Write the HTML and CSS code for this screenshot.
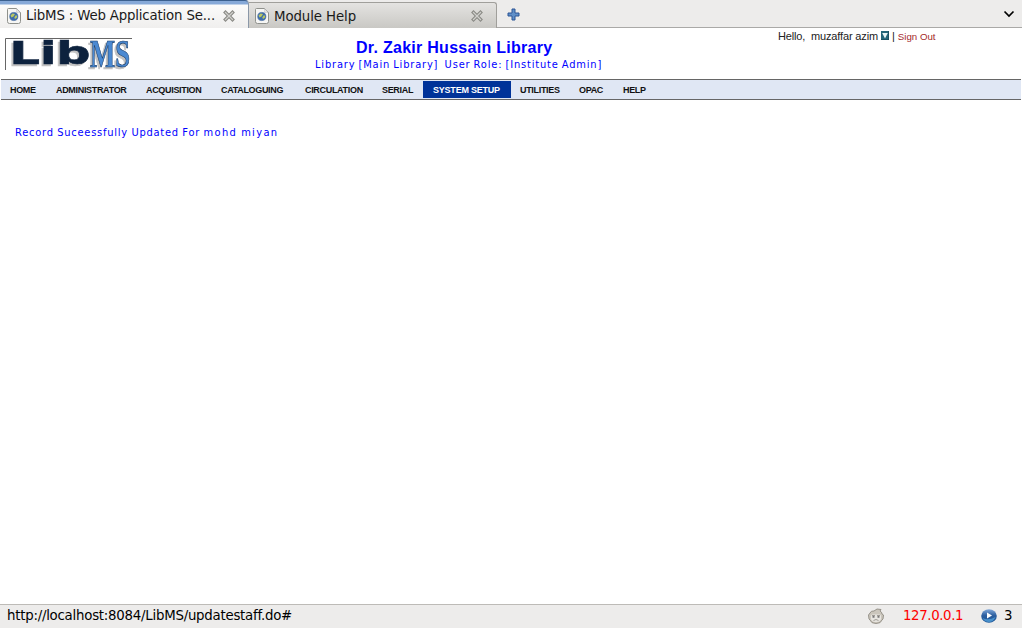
FILE: index.html
```html
<!DOCTYPE html>
<html lang="en">
<head>
<meta charset="utf-8">
<title>LibMS : Web Application Server</title>
<link rel="stylesheet" href="styles.css">
</head>
<body>
<svg width="0" height="0" class="defs" aria-hidden="true">
  <defs>
    <linearGradient id="blue" x1="0" y1="0" x2="0" y2="1"><stop offset="0" stop-color="#83aadb"/><stop offset=".45" stop-color="#2d5f9f"/><stop offset="1" stop-color="#1c5597"/></linearGradient>
    <symbol id="page" viewBox="0 0 14 16">
      <path d="M1.500.5h8l4 4v9q0 2-2 2h-9q-2 0-2-2v-12q0-1 1-1z" fill="#f6f6f4" stroke="#8f918c"/>
      <path d="M9.500.5q.8 1.500.2 3.800 2.500-.6 3.500.3z" fill="#fff" stroke="#aaa" stroke-width=".6"/>
      <circle cx="6.800" cy="8.500" r="4.100" fill="#3d6cab" stroke="#3f679f" stroke-width=".6"/>
      <path d="M3.500 7.500l2-2 2.500.5-1.500 2.500-2 1zM8.500 7.500l1.500 0v2L8 11 7.300 9.500z" fill="#b9c763"/>
    </symbol>
    <symbol id="close" viewBox="0 0 12 12">
      <path d="M2.500 2.500l7 7m0-7l-7 7" stroke="#888883" stroke-width="3.400" stroke-linecap="square"/>
      <path d="M2.500 2.500l7 7m0-7l-7 7" stroke="#d0d0cd" stroke-width="1.300" stroke-linecap="square"/>
    </symbol>
  </defs>
</svg>
<div class="window">
  <header class="tabs">
    <div class="tab tab-active"><svg class="page-icon"><use href="#page"/></svg><span class="tab-title">LibMS : Web Application Se...</span><svg class="close"><use href="#close"/></svg></div>
    <div class="tab tab-idle"><svg class="page-icon"><use href="#page"/></svg><span class="tab-title tab-title-idle">Module Help</span><svg class="close"><use href="#close"/></svg></div>
    <svg class="plus" viewBox="0 0 13 13"><path d="M5 1h3v4h4v3H8v4H5V8H1V5h4z" fill="#5f8fc8" stroke="#2a5595" stroke-linejoin="round"/></svg>
    <svg class="chevron" viewBox="0 0 12 8"><path d="M1.500 1.500L6 6l4.500-4.500" fill="none" stroke="#000" stroke-width="1.700"/></svg>
  </header>
  <main class="content">
    <div class="banner">
      <svg class="logo" viewBox="0 0 127 33">
        <path d="M.5 32V.5H127" fill="none" stroke="#666"/>
        <text x="4.500" y="26" textLength="81" lengthAdjust="spacingAndGlyphs" class="logo-lib">Lib</text>
        <text x="85" y="28.500" textLength="40" lengthAdjust="spacingAndGlyphs" class="logo-ms">MS</text>
      </svg>
      <div class="heading">
        <h1 class="library">Dr. Zakir Hussain Library</h1>
        <p class="role">Library [Main Library]&nbsp; User Role: [Institute Admin]</p>
      </div>
      <div class="user">
        <span class="hello">Hello,&nbsp; muzaffar azim</span>
        <svg class="drop" viewBox="0 0 8 9"><path d="M0 0h8v9H0z" fill="#236478"/><path d="M0 9h8V0" fill="none" stroke="#123c4a"/><path d="M1.200 2h5.600L4 7.500z" fill="#e9f5f5"/></svg>
        <span class="bar">|</span>
        <a class="signout">Sign Out</a>
      </div>
    </div>
    <nav class="menu">
      <a class="item">HOME</a><a class="item">ADMINISTRATOR</a><a class="item">ACQUISITION</a><a class="item">CATALOGUING</a><a class="item">CIRCULATION</a><a class="item">SERIAL</a><a class="item item-active">SYSTEM SETUP</a><a class="item">UTILITIES</a><a class="item">OPAC</a><a class="item">HELP</a>
    </nav>
    <p class="message">Record Suceessfully Updated For <span class="name">mohd miyan</span></p>
  </main>
  <footer class="status">
    <span class="url">http://localhost:8084/LibMS/updatestaff.do#</span>
    <svg class="face" viewBox="0 0 16 16"><path d="M2 5Q3 2.500 6 3l3-2 4 .5-1 1.500q2 1 2 3l1.500 1-.5 4-1 1q-1 3.500-6 3.500T2 12L1 11 .5 7z" fill="#cbc6bc" stroke="#8f8b82" stroke-width=".9"/><path d="M3 8q0-2 2.500-1.500h5Q13 6 13 8q1 6-5 6T3 8z" fill="#e8e6e1"/><path d="M5.500 12.500q2.500-2 5 0M4 7.500h3m2 0h3" fill="none" stroke="#8d8981" stroke-width=".8"/><path d="M4.500 8h2v1.700h-2zM9.500 8h2v1.700h-2z" fill="#777"/></svg>
    <span class="ip">127.0.0.1</span>
    <svg class="play" viewBox="0 0 16 14"><ellipse cx="8" cy="7" rx="7.800" ry="6.800" fill="url(#blue)"/><path d="M1.500 9q6 3 13-1-2 5-6.500 5T1.500 9z" fill="#62b5ec" opacity=".6"/><path d="M6 3.500l5 3-5 3z" fill="#fff"/></svg>
    <span class="count">3</span>
  </footer>
</div>
</body>
</html>
```
FILE: styles.css
```css
body { margin: 0; background: #fff; overflow: hidden; }
.defs { position: absolute; }
.window { width: 1022px; height: 628px; display: flex; flex-direction: column; }
.tabs, .status { font-family: "DejaVu Sans", sans-serif; font-size: 13.330px; color: #1a1a1a; background: #edeceb; white-space: nowrap; }
.tabs { height: 28px; display: flex; flex: none; box-sizing: border-box; border-bottom: 1px solid #aaa9a7; }
.tab { display: flex; box-sizing: border-box; }
.tab-active { width: 249px; height: 28px; padding: 4px 13px 0 7px; border-top: 1px solid #3b608f; border-right: 1px solid #8b98a8; border-radius: 0 4px 0 0; background: linear-gradient(#86a9d8 0, #86a9d8 3px, #fbfbfa 4px, #f0efee 27px); }
.tab-idle { width: 248px; height: 26px; margin-top: 2px; padding: 5px 13px 0 6px; border: 1px solid #a09f9b; border-left: 0; border-bottom: 0; border-radius: 0 3px 0 0; background: linear-gradient(#e4e3e1, #c9c8c4); }
.page-icon { width: 14px; height: 16px; margin-top: 3px; flex: none; }
.tab-idle .page-icon { margin-top: 0; }
.tab-title { width: 190px; margin: 3px 0 0 5px; line-height: 16px; letter-spacing: -.17px; }
.tab-title-idle { margin-top: 1px; letter-spacing: -.1px; }
.close { width: 12px; height: 12px; margin: 5px 0 0 auto; flex: none; }
.tab-idle .close { margin-top: 2px; }
.plus { width: 13px; height: 13px; margin: 8px 0 0 10px; }
.chevron { width: 12px; height: 8px; margin: 10px 7px 0 auto; }
.content { flex: 1; }
.banner { height: 51px; display: grid; grid-template-columns: 315px 463px 1fr; }
.logo { width: 127px; height: 33px; margin: 10px 0 0 5px; overflow: visible; }
.logo-lib { font: bold 32px "DejaVu Sans", sans-serif; fill: #0d223e; stroke: #0d223e; stroke-width: .6px; filter: drop-shadow(-2px 2.500px 0 #c2c2c2); }
.logo-ms { font: bold 40px "Liberation Serif", serif; fill: #4a89d2; stroke: #193b66; stroke-width: .7px; filter: drop-shadow(-2px 2.500px 0 #c2c2c2); }
.heading { width: 289px; padding-top: 10px; white-space: nowrap; }
.library { margin: 0 0 0 41px; font: bold 16px/20px "Liberation Sans", sans-serif; letter-spacing: .28px; color: #00f; }
.role { margin: 0; font: 11px/13px "DejaVu Sans Condensed", "DejaVu Sans", sans-serif; letter-spacing: .82px; word-spacing: -.8px; color: #00f; }
.user { display: flex; padding-top: 2px; font: 11px/13px "Liberation Sans", sans-serif; color: #222; white-space: nowrap; }
.hello { width: 103px; letter-spacing: -.15px; }
.drop { width: 8px; height: 9px; margin-top: 1px; }
.bar { margin-left: 3px; }
.signout { margin: 0 0 0 3px; font-size: 9.700px; line-height: 14px; color: #a52a2a; }
.menu { height: 21px; margin: 0 1px; box-sizing: border-box; padding: 1px 0; display: grid; grid-template-columns: 45px 90px 75px 84px 77px 51px 88px 59px 44px 50px; border-top: 1px solid #666; border-bottom: 1px solid #666; background: #e0e7f4; }
.item { padding-left: 10px; font: bold 9px/19px "Liberation Sans", sans-serif; height: 17px; letter-spacing: -.32px; color: #111; white-space: nowrap; }
.item:first-child, .item-active ~ .item { padding-left: 9px; }
.item-active { background: #039; color: #fff; letter-spacing: -.22px; }
.message { margin: 26px 0 0 15px; font: 11px/13px "DejaVu Sans Condensed", "DejaVu Sans", sans-serif; letter-spacing: .77px; word-spacing: -.5px; color: #00f; white-space: nowrap; }
.name { letter-spacing: 1.350px; }
.status { height: 24px; box-sizing: border-box; flex: none; display: flex; border-top: 1px solid #bdbbb7; padding: 2px 0 0 7px; line-height: 17px; color: #000; }
.url { width: 861px; letter-spacing: -.240px; }
.face { width: 16px; height: 16px; margin-top: 1px; }
.ip { width: 62px; margin-left: 19px; letter-spacing: -.38px; color: #f00; }
.play { width: 16px; height: 14px; margin: 2px 0 0 16px; }
.count { margin-left: 7px; }
```
